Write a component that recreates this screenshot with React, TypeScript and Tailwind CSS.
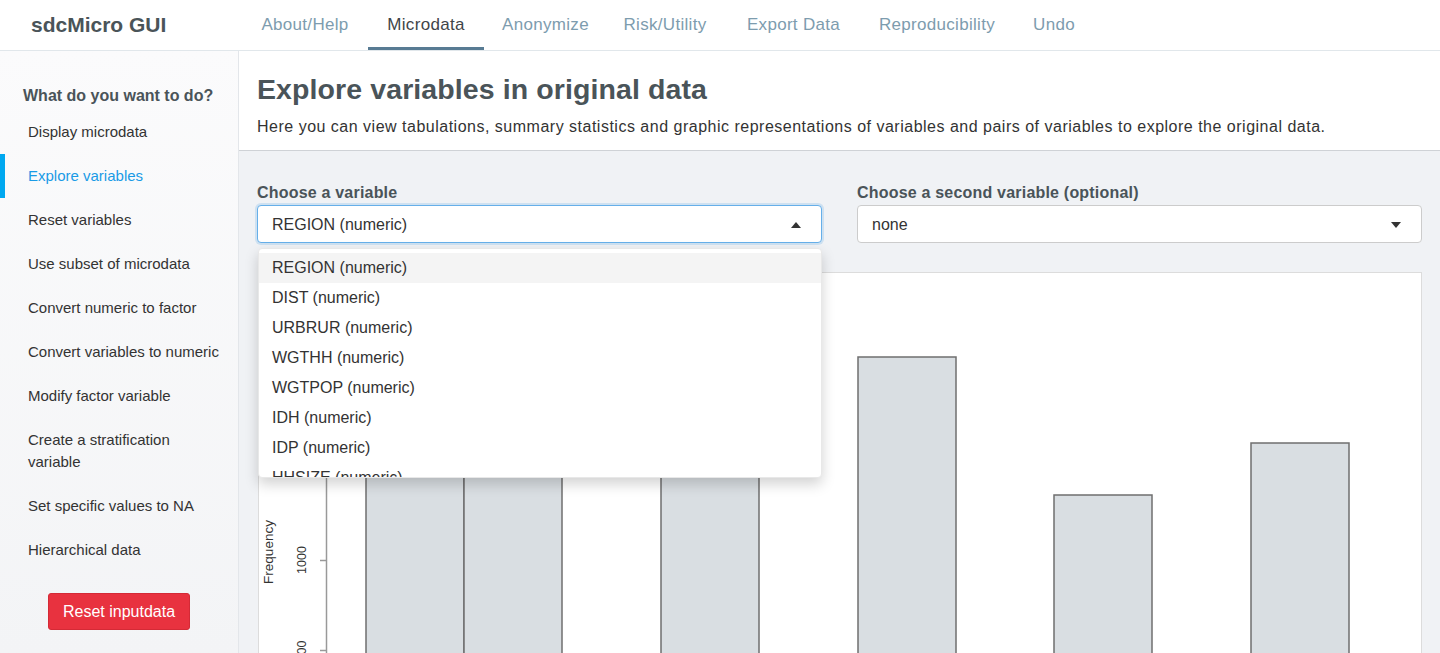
import React from 'react';

// tab widths measured from the screenshot so labels sit centred under the same spots
const tabs = [
  { label: 'About/Help', w: 'w-[126px]' },
  { label: 'Microdata', w: 'w-[116px]' },
  { label: 'Anonymize', w: 'w-[123px]' },
  { label: 'Risk/Utility', w: 'w-[116px]' },
  { label: 'Export Data', w: 'w-[141px]' },
  { label: 'Reproducibility', w: 'w-[146px]' },
  { label: 'Undo', w: 'w-[88px]' },
];

const menuItems = [
  'Display microdata',
  'Explore variables',
  'Reset variables',
  'Use subset of microdata',
  'Convert numeric to factor',
  'Convert variables to numeric',
  'Modify factor variable',
  'Create a stratification variable',
  'Set specific values to NA',
  'Hierarchical data',
];

const options = [
  'REGION (numeric)',
  'DIST (numeric)',
  'URBRUR (numeric)',
  'WGTHH (numeric)',
  'WGTPOP (numeric)',
  'IDH (numeric)',
  'IDP (numeric)',
  'HHSIZE (numeric)',
  'AGE (numeric)',
];

// bar positions relative to the plot panel (x from panel left, top from panel top)
const bars = [
  { x: 107, top: 60 },
  { x: 205, top: 50 },
  { x: 402, top: 130 },
  { x: 599, top: 84 },
  { x: 795, top: 222 },
  { x: 992, top: 170 },
];

const Caret = ({ up }: { up?: boolean }) => (
  <svg width="10" height="6" viewBox="0 0 10 6" className="shrink-0">
    {up ? <path d="M0 6 L5 0 L10 6 Z" fill="#333" /> : <path d="M0 0 L5 6 L10 0 Z" fill="#333" />}
  </svg>
);

const axisFont = 'Liberation Sans, Arial, sans-serif';

const BarChart = () => (
  <svg width="1164" height="400" className="block">
    {/* y axis */}
    <line x1="67.5" y1="190" x2="67.5" y2="400" stroke="#999" strokeWidth="1.5" />
    <line x1="61" y1="287.5" x2="67.5" y2="287.5" stroke="#999" strokeWidth="1.5" />
    <line x1="61" y1="377.5" x2="67.5" y2="377.5" stroke="#999" strokeWidth="1.5" />
    <text transform="translate(47 287) rotate(-90)" textAnchor="middle" fontSize="12.5" fill="#333" fontFamily={axisFont}>
      1000
    </text>
    <text transform="translate(47 378) rotate(-90)" textAnchor="middle" fontSize="12.5" fill="#333" fontFamily={axisFont}>
      500
    </text>
    <text transform="translate(14 279) rotate(-90)" textAnchor="middle" fontSize="13.5" fill="#333" fontFamily={axisFont}>
      Frequency
    </text>
    {bars.map((b, i) => (
      <rect key={i} x={b.x} y={b.top} width={98} height={400 - b.top} fill="#d9dee2" stroke="#6f6f6f" strokeWidth="1.5" />
    ))}
  </svg>
);

export default function App() {
  return (
    <div
      className="h-[653px] w-[1440px] overflow-hidden bg-white flex flex-col text-[#333]"
      style={{ fontFamily: '"Liberation Sans", Arial, sans-serif' }}
    >
      {/* Top navbar */}
      <header className="h-[51px] shrink-0 flex border-b border-[#e1e7eb] bg-white">
        <div className="w-[242px] shrink-0 flex items-center pl-[31px] pb-[1px]">
          <span className="text-[21px] font-bold text-[#4a5459]">sdcMicro GUI</span>
        </div>
        <nav className="flex h-full">
          {tabs.map((t) => (
            <div
              key={t.label}
              className={
                t.label === 'Microdata'
                  ? `${t.w} h-full flex items-center justify-center text-[17px] tracking-[0.3px] text-[#3f4549] border-b-[3px] border-[#587b93] pt-[3px] -mb-[1px]`
                  : `${t.w} h-full flex items-center justify-center text-[17px] tracking-[0.3px] text-[#7d9cae]`
              }
            >
              {t.label}
            </div>
          ))}
        </nav>
      </header>

      <div className="flex flex-1 min-h-0">
        {/* Sidebar */}
        <aside className="w-[239px] shrink-0 border-r border-[#e3e6ea] bg-gradient-to-b from-[#fbfbfc] to-[#f3f4f6] pt-[34px]">
          <h4 className="pl-[23px] text-[16px] leading-[22px] font-bold text-[#4a5459] mb-[3px]">What do you want to do?</h4>
          <ul>
            {menuItems.map((m) => (
              <li
                key={m}
                className={
                  m === 'Explore variables'
                    ? 'relative pl-[28px] pr-3 py-[11px] text-[15px] leading-[22px] text-[#1a9be6]'
                    : 'relative pl-[28px] pr-3 py-[11px] text-[15px] leading-[22px] text-[#333]'
                }
              >
                {m === 'Explore variables' && <span className="absolute left-0 top-0 bottom-0 w-[5px] bg-[#00a8f0]" />}
                {m}
              </li>
            ))}
          </ul>
          <div className="flex justify-center mt-[21px]">
            <button className="h-[37px] w-[142px] rounded-[3px] bg-[#e8323f] border border-[#d42a36] text-white text-[16px]">
              Reset inputdata
            </button>
          </div>
        </aside>

        {/* Main */}
        <main className="flex-1 min-w-0 bg-[#f0f2f5] flex flex-col">
          <div className="bg-white border-b border-[#cfd2d6] px-[18px] pt-[21px] pb-[12px]">
            <h1 className="text-[28.5px] leading-[34px] font-bold text-[#4a5459] tracking-[0.1px]">
              Explore variables in original data
            </h1>
            <p className="mt-[10px] text-[16px] leading-[22px] text-[#333] tracking-[0.5px]">
              Here you can view tabulations, summary statistics and graphic representations of variables and pairs of
              variables to explore the original data.
            </p>
          </div>

          <div className="px-[18px] pt-[31px]">
            <div className="grid grid-cols-2 gap-x-[35px]">
              <div className="relative">
                <label className="block text-[16px] leading-[22px] font-bold text-[#4a5459] mb-[1px] tracking-[0.2px]">
                  Choose a variable
                </label>
                <div className="h-[38px] bg-white border border-[#66afe9] rounded-[4px] shadow-[0_0_0_2px_rgba(102,175,233,0.25)] flex items-center justify-between pl-[14px] pr-[20px] pt-[1px]">
                  <span className="text-[16px]">REGION (numeric)</span>
                  <Caret up />
                </div>
                {/* open dropdown menu */}
                <div className="absolute left-[1px] right-0 top-[66px] z-10 h-[230px] overflow-hidden bg-white rounded-[4px] border border-[#e8e8e8] shadow-[0_6px_14px_rgba(0,0,0,0.18)] pt-[4px]">
                  {options.map((o, i) => (
                    <div
                      key={o}
                      className={
                        i === 0
                          ? 'h-[30px] flex items-center pl-[13px] text-[16px] bg-[#f4f4f4]'
                          : 'h-[30px] flex items-center pl-[13px] text-[16px]'
                      }
                    >
                      {o}
                    </div>
                  ))}
                </div>
              </div>
              <div>
                <label className="block text-[16px] leading-[22px] font-bold text-[#4a5459] mb-[1px] tracking-[0.2px]">
                  Choose a second variable (optional)
                </label>
                <div className="h-[38px] bg-white border border-[#ccc] rounded-[4px] flex items-center justify-between pl-[14px] pr-[20px] pt-[1px]">
                  <span className="text-[16px]">none</span>
                  <Caret />
                </div>
              </div>
            </div>

            {/* plot panel */}
            <div className="mt-[29px] ml-[1px] bg-white border border-[#dcdcdc] h-[420px] overflow-hidden">
              <BarChart />
            </div>
          </div>
        </main>
      </div>
    </div>
  );
}
